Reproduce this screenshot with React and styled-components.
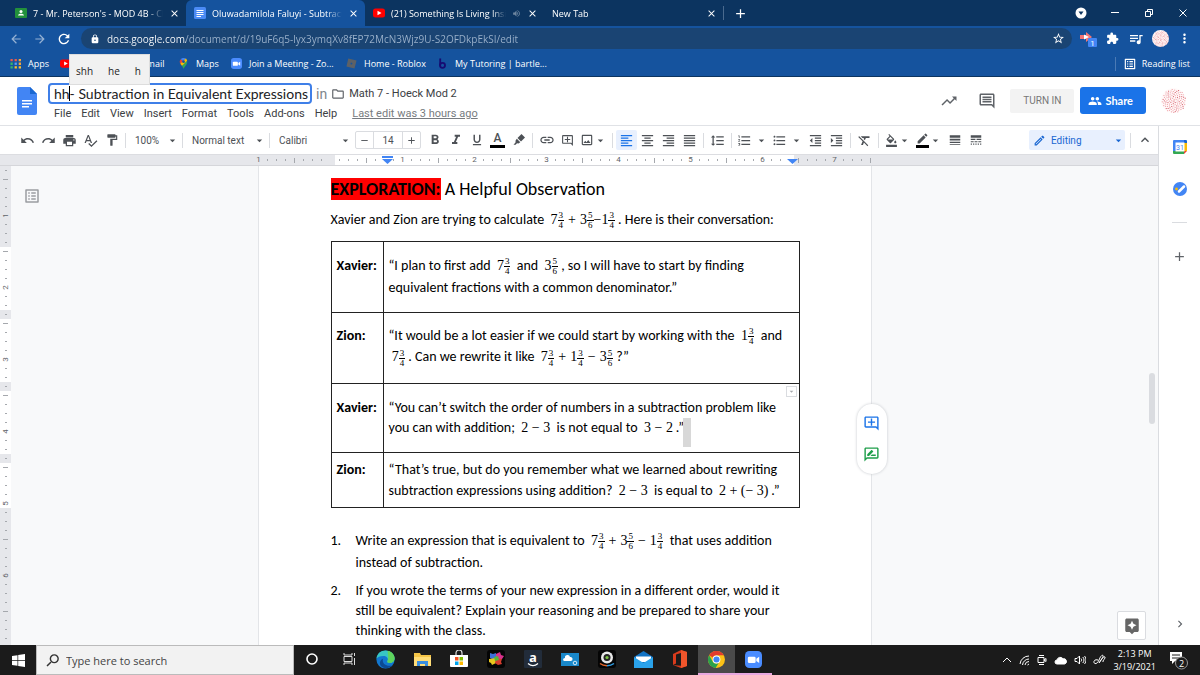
import React from 'react'
import styled, { createGlobalStyle } from 'styled-components'
import {
    MdArrowBack, MdArrowForward, MdRefresh, MdLock, MdStarBorder, MdExtension, MdQueueMusic, MdMoreVert,
    MdClose, MdAdd, MdRemove, MdVolumeUp, MdOutlineListAlt, MdOutlineFolder, MdTrendingUp,
    MdOutlineInsertComment, MdGroup, MdUndo, MdRedo, MdPrint, MdSpellcheck, MdFormatPaint,
    MdArrowDropDown, MdFormatBold, MdFormatItalic, MdFormatUnderlined, MdInsertLink, MdOutlineAddComment,
    MdOutlineImage, MdFormatAlignLeft, MdFormatAlignCenter, MdFormatAlignRight, MdFormatAlignJustify,
    MdFormatLineSpacing, MdFormatListNumbered, MdFormatListBulleted, MdFormatIndentDecrease,
    MdFormatIndentIncrease, MdFormatClear, MdFormatColorFill, MdLineWeight, MdLineStyle, MdExpandLess,
    MdOutlineEdit, MdEdit, MdOutlineRateReview, MdChevronRight, MdAssistant, MdSearch,
} from 'react-icons/md'

const GlobalStyle = createGlobalStyle`
    * {
        box-sizing: border-box;
    }
    body {
        margin: 0;
        font-family: Roboto, "Liberation Sans", sans-serif;
        color: #000;
    }
    button, input, select {
        font: inherit;
        color: inherit;
        margin: 0;
        padding: 0;
        border: none;
        background: none;
        outline: none;
    }
    svg {
        display: block;
        flex: none;
    }
`

const tabs = [
    { title: "7 - Mr. Peterson's - MOD 4B - Ch", icon: 'classroom' },
    { title: 'Oluwadamilola Faluyi - Subtractic', icon: 'docs', active: true },
    { title: '(21) Something Is Living Insic', icon: 'youtube', sound: true },
    { title: 'New Tab' },
]

const bookmarks = [
    { id: 'apps', label: 'Apps', width: 50 },
    { id: 'youtube', width: 62 },
    { id: 'gmail', label: 'Gmail', width: 56 },
    { id: 'maps', label: 'Maps', width: 53 },
    { id: 'zoom', label: 'Join a Meeting - Zo...', width: 115 },
    { id: 'roblox', label: 'Home - Roblox', width: 91 },
    { id: 'bartleby', label: 'My Tutoring | bartle...', width: 120 },
]

const menus = ['File', 'Edit', 'View', 'Insert', 'Format', 'Tools', 'Add-ons', 'Help']

const Glyph = ({ name, size = 12 }) => {
    const box = { width: size, height: size, viewBox: '0 0 24 24' }
    switch (name) {
        case 'classroom':
            return (
                <svg {...box}>
                    <rect y="2" width="24" height="20" rx="2" fill="#23913c" />
                    <circle cx="12" cy="9" r="3" fill="#fff" />
                    <path d="M6 17c0-5 12-5 12 0z" fill="#fff" />
                </svg>
            )
        case 'docs':
            return (
                <svg {...box}>
                    <rect width="24" height="24" rx="3" fill="#4b8bf5" />
                    <path d="M5 6h14v2H5zM5 10h14v2H5zM5 14h14v2H5zM5 18h9v2H5z" fill="#fff" />
                </svg>
            )
        case 'youtube':
            return (
                <svg {...box}>
                    <rect y="3" width="24" height="18" rx="5" fill="#f00" />
                    <path d="M9 7.500v9l8-4.500z" fill="#fff" />
                </svg>
            )
        case 'apps':
            return (
                <svg {...box}>
                    <path d="M1 2h5v5H1zM10 2h5v5h-5z" fill="#ea5b4c" />
                    <path d="M19 2h5v5h-5zM19 10h5v5h-5z" fill="#f4a43a" />
                    <path d="M1 10h5v5H1zM1 18h5v5H1z" fill="#35b56a" />
                    <path d="M10 10h5v5h-5z" fill="#5b9cf8" />
                    <path d="M10 18h5v5h-5zM19 18h5v5h-5z" fill="#fbc02d" />
                </svg>
            )
        case 'gmail':
            return (
                <svg {...box}>
                    <rect y="4" width="24" height="17" rx="2" fill="#fff" />
                    <path d="M2 6l10 8 10-8" stroke="#ea4335" strokeWidth="4" fill="none" />
                </svg>
            )
        case 'maps':
            return (
                <svg {...box}>
                    <path d="M12 0a8 8 0 0 0-6 2.500l6 5.500 5-6.800A9 9 0 0 0 12 0z" fill="#4285f4" />
                    <path d="M6 2.500C3.500 5 3 9 5 12.500L12 8z" fill="#ea4335" />
                    <path d="M5 12.500l4 5L20 6.500C19.500 4 18.500 2 17 1.200z" fill="#fbbc04" />
                    <path d="M9 17.500c1.500 2 2.300 4 3 6.500 1-5 8-9 8-15.500 0-.8 0-1.400-.2-2z" fill="#34a853" />
                    <circle cx="12" cy="8" r="3" fill="#15539e" />
                </svg>
            )
        case 'zoom':
            return (
                <svg {...box}>
                    <rect width="24" height="24" rx="6" fill="#4a8cff" />
                    <rect x="4" y="8" width="11" height="9" rx="2" fill="#fff" />
                    <path d="M16 11l4-3v9l-4-3z" fill="#fff" />
                </svg>
            )
        case 'roblox':
            return (
                <svg {...box}>
                    <path fillRule="evenodd" d="M5 1l18 4.500L18.500 23 1 18.500zM10.500 10l-.8 3.500 3.500.8.800-3.500z" fill="#5d6166" />
                </svg>
            )
        case 'bartleby':
            return (
                <svg {...box}>
                    <path d="M7 1v15" stroke="#160c72" strokeWidth="4" />
                    <circle cx="12" cy="16" r="5.500" fill="none" stroke="#160c72" strokeWidth="4" />
                </svg>
            )
        default:
            return null
    }
}

const speckles = Array.from({ length: 110 }, (_, i) => {
    const angle = i * 2.4
    const radius = Math.sqrt(i / 110) * 11.5
    return [12 + Math.cos(angle) * radius, 12 + Math.sin(angle) * radius]
})

const Avatar = ({ size }) => (
    <svg width={size} height={size} viewBox="0 0 24 24">
        <circle cx="12" cy="12" r="12" fill="#fffafa" />
        {speckles.map(([x, y], i) => (
            <rect key={i} x={x} y={y} width="1" height="1" fill={i % 3 ? '#efa3a9' : '#d9606c'} />
        ))}
    </svg>
)

const Browser = () => (
    <>
        <TabStrip>
            {tabs.map(tab => (
                <Tab key={tab.title} $active={tab.active}>
                    <Glyph name={tab.icon} />
                    <span>{tab.title}</span>
                    {tab.sound && <MdVolumeUp size={9} opacity={0.4} />}
                    <button aria-label="Close tab"><MdClose size={11} /></button>
                </Tab>
            ))}
            <NewTab aria-label="New tab"><MdAdd size={15} /></NewTab>
            <WindowControls>
                <button aria-label="Search tabs">
                    <svg width="12" height="12" viewBox="0 0 12 12">
                        <circle cx="6" cy="6" r="5.500" fill="#fff" />
                        <path d="M3.500 4.500h5L6 8z" fill="#0c3460" />
                    </svg>
                </button>
                <button aria-label="Minimize">
                    <svg width="9" height="9" viewBox="0 0 9 9"><path d="M0 3.500h8" stroke="#fff" /></svg>
                </button>
                <button aria-label="Restore">
                    <svg width="9" height="9" viewBox="0 0 9 9" fill="none" stroke="#fff">
                        <path d="M.5 2.500h5v5h-5zM2.500 2.500v-2h5v5h-2" />
                    </svg>
                </button>
                <button aria-label="Close">
                    <svg width="9" height="9" viewBox="0 0 9 9" stroke="#fff"><path d="M.5.5l7 7M7.500.5l-7 7" /></svg>
                </button>
            </WindowControls>
        </TabStrip>
        <AddressBar>
            <NavButton $dim aria-label="Back"><MdArrowBack size={14} /></NavButton>
            <NavButton $dim aria-label="Forward"><MdArrowForward size={14} /></NavButton>
            <NavButton aria-label="Reload"><MdRefresh size={16} /></NavButton>
            <Omnibox>
                <MdLock size={10} />
                <input
                    aria-label="Address"
                    defaultValue="docs.google.com/document/d/19uF6q5-lyx3ymqXv8fEP72McN3Wjz9U-S2OFDkpEkSI/edit"
                />
                <MdStarBorder size={13} />
            </Omnibox>
            <Extensions>
                <button aria-label="Screencastify">
                    <svg width="18" height="18" viewBox="0 0 18 18">
                        <path d="M1 5h6V2l6 5-6 5V9H1z" fill="#f27474" />
                        <path d="M5 4.500l5 2.500-5 2.500z" fill="#fff" />
                        <rect x="9" y="8" width="9" height="9" rx="1" fill="#4285f4" />
                        <text x="13.500" y="15.500" fontSize="8" textAnchor="middle" fill="#fff">1</text>
                    </svg>
                </button>
                <button aria-label="Extensions"><MdExtension size={13} /></button>
                <button aria-label="Media"><MdQueueMusic size={16} /></button>
                <button aria-label="Profile"><Avatar size={17} /></button>
                <button aria-label="More"><MdMoreVert size={15} /></button>
            </Extensions>
        </AddressBar>
        <Bookmarks>
            {bookmarks.map(b => (
                <Bookmark key={b.id} href="#" aria-label={b.label || b.id} $width={b.width}>
                    <Glyph name={b.id} size={11} />
                    {b.label}
                </Bookmark>
            ))}
            <ReadingList>
                <MdOutlineListAlt size={14} />
                Reading list
            </ReadingList>
        </Bookmarks>
    </>
)

const Header = () => (
    <DocHeader>
        <svg width="20" height="28" viewBox="0 0 20 28">
            <path d="M2 0h11l7 7v19a2 2 0 0 1-2 2H2a2 2 0 0 1-2-2V2a2 2 0 0 1 2-2z" fill="#4285f4" />
            <path d="M13 0l7 7h-7z" fill="#1967d2" />
            <path d="M5 13h10v1.500H5zM5 16h10v1.500H5zM5 19h7v1.500H5z" fill="#fff" />
        </svg>
        <TitleBlock>
            <TitleRow>
                <TitleField>
                    <input aria-label="Document title" defaultValue="hh- Subtraction in Equivalent Expressions" />
                    <Caret />
                    <Suggestions>
                        <button>shh</button>
                        <button>he</button>
                        <button>h</button>
                    </Suggestions>
                </TitleField>
                <In>in</In>
                <MdOutlineFolder size={14} color="#5f6368" />
                <Folder href="#">Math 7 - Hoeck Mod 2</Folder>
            </TitleRow>
            <Menus>
                {menus.map(m => <button key={m}>{m}</button>)}
                <a href="#">Last edit was 3 hours ago</a>
            </Menus>
        </TitleBlock>
        <HeaderActions>
            <IconButton aria-label="Activity"><MdTrendingUp size={18} /></IconButton>
            <IconButton aria-label="Comments"><MdOutlineInsertComment size={18} /></IconButton>
            <TurnIn>TURN IN</TurnIn>
            <Share><MdGroup size={14} />Share</Share>
            <Avatar size={25} />
        </HeaderActions>
    </DocHeader>
)

const Picker = ({ label, value, width }) => (
    <PickerBox $width={width}>
        <select aria-label={label} defaultValue={value}>
            <option>{value}</option>
        </select>
        <MdArrowDropDown size={13} />
    </PickerBox>
)

const Tool = ({ label, icon: Icon, size = 15, drop, wide, active, mark }) => (
    <ToolButton aria-label={label} $drop={drop} $wide={wide} $active={active} $mark={mark}>
        <i><Icon size={size} /></i>
        {(drop || wide) && <MdArrowDropDown size={13} />}
    </ToolButton>
)

const LetterA = () => <b>A</b>

const Marker = ({ size }) => (
    <svg width={size} height={size} viewBox="0 0 12 12" fill="currentColor">
        <path d="M8.500 0L12 3.500 8 7.500 4.500 4zM3.800 4.700l3.500 3.500L5.500 9.500 4 9.300 2.600 10.800H.5l2-2.300.1-2z" />
    </svg>
)

const Toolbar = () => (
    <ToolbarRow>
        <Tool label="Undo" icon={MdUndo} />
        <Tool label="Redo" icon={MdRedo} />
        <Tool label="Print" icon={MdPrint} />
        <Tool label="Spelling" icon={MdSpellcheck} />
        <Tool label="Paint format" icon={MdFormatPaint} size={14} />
        <Divider />
        <Picker label="Zoom" value="100%" width={44} />
        <Divider />
        <Picker label="Style" value="Normal text" width={74} />
        <Divider />
        <Picker label="Font" value="Calibri" width={73} />
        <FontSize>
            <button aria-label="Decrease"><MdRemove size={11} /></button>
            <input aria-label="Font size" defaultValue="14" />
            <button aria-label="Increase"><MdAdd size={11} /></button>
        </FontSize>
        <Tool label="Bold" icon={MdFormatBold} size={16} />
        <Tool label="Italic" icon={MdFormatItalic} size={16} />
        <Tool label="Underline" icon={MdFormatUnderlined} size={14} />
        <Tool label="Text color" icon={LetterA} mark />
        <Tool label="Highlight" icon={Marker} size={12} />
        <Divider />
        <Tool label="Link" icon={MdInsertLink} size={16} />
        <Tool label="Comment" icon={MdOutlineAddComment} size={13} />
        <Tool label="Image" icon={MdOutlineImage} size={14} drop />
        <Divider />
        <Tool label="Left" icon={MdFormatAlignLeft} active />
        <Tool label="Center" icon={MdFormatAlignCenter} />
        <Tool label="Right" icon={MdFormatAlignRight} />
        <Tool label="Justify" icon={MdFormatAlignJustify} />
        <Divider />
        <Tool label="Line spacing" icon={MdFormatLineSpacing} />
        <Divider />
        <Tool label="Numbered list" icon={MdFormatListNumbered} wide />
        <Tool label="Bulleted list" icon={MdFormatListBulleted} wide />
        <Tool label="Outdent" icon={MdFormatIndentDecrease} />
        <Tool label="Indent" icon={MdFormatIndentIncrease} />
        <Divider />
        <Tool label="Clear formatting" icon={MdFormatClear} />
        <Divider />
        <Tool label="Fill color" icon={MdFormatColorFill} size={13} drop />
        <Tool label="Border color" icon={MdEdit} size={13} drop mark />
        <Tool label="Border width" icon={MdLineWeight} size={14} />
        <Tool label="Border dash" icon={MdLineStyle} size={14} />
        <EditingMode>
            <MdOutlineEdit size={13} />
            <select aria-label="Mode" defaultValue="Editing">
                <option>Editing</option>
            </select>
            <MdArrowDropDown size={13} />
        </EditingMode>
        <Divider />
        <Tool label="Hide menus" icon={MdExpandLess} size={16} />
    </ToolbarRow>
)

const ticks = Array.from({ length: 69 }, (_, i) => i)

const tickLabel = i => (i === 0 ? '1' : i % 8 === 0 && i > 8 ? i / 8 - 1 : '')

const Ruler = () => (
    <RulerBar>
        <RulerStrip>
            {ticks.map(i => (
                <Tick key={i} $white={i > 8 && i < 60} $major={i % 8 === 4} $none={i % 8 === 0}>
                    {tickLabel(i)}
                    {(i === 14 || i === 59) && (
                        <svg width="11" height="8" viewBox="0 0 11 8">
                            {i === 14 && <path d="M0 0h11v2H0z" fill="#4285f4" />}
                            <path d="M0 3h11L5.500 8z" fill="#4285f4" />
                        </svg>
                    )}
                </Tick>
            ))}
        </RulerStrip>
    </RulerBar>
)

// table rows are white on the side ruler, with a handle at each inner border
const rowHandles = [16, 24, 32]

const SideRuler = () => (
    <SideRulerBar>
        {ticks.slice(0, 53).map(i => (
            <SideTick
                key={i}
                $white={i > 8 && i < 38 && !rowHandles.includes(i)}
                $major={i % 8 === 1}
                $none={i % 8 === 5}
            >
                {i % 8 === 5 && <span>{(i + 3) / 8}</span>}
            </SideTick>
        ))}
    </SideRulerBar>
)

const Mixed = ({ w, n, d }) => (
    <MathText>
        {w}
        <Fraction><span>{n}</span><span>{d}</span></Fraction>
    </MathText>
)

const A = () => <Mixed w="7" n="3" d="4" />
const B = () => <Mixed w="3" n="5" d="6" />
const C = () => <Mixed w="1" n="3" d="4" />

const Document = () => (
    <Page>
        <h1><mark>EXPLORATION:</mark> A Helpful Observation</h1>
        <p>
            Xavier and Zion are trying to calculate&nbsp; <A /><Op>+</Op><B /><MathText>−</MathText><C />&nbsp;. Here is their conversation:
        </p>
        <Talk>
            <tbody>
                <TalkRow $height={71} $top={13} $line={22}>
                    <th scope="row">Xavier:</th>
                    <td>
                        “I plan to first add&nbsp; <A />&nbsp; and&nbsp; <B />&nbsp;, so I will have to start by finding<br />
                        equivalent fractions with a common denominator.”
                    </td>
                </TalkRow>
                <TalkRow $height={71} $top={12} $line={21}>
                    <th scope="row">Zion:</th>
                    <td>
                        “It would be a lot easier if we could start by working with the&nbsp; <C />&nbsp; and<br />
                        &nbsp;<A />&nbsp;. Can we rewrite it like&nbsp; <A /><Op>+</Op><C /><Op>−</Op><B /> ?”
                    </td>
                </TalkRow>
                <TalkRow $height={69} $top={14} $line={20}>
                    <th scope="row">Xavier:</th>
                    <td>
                        “You can’t switch the order of numbers in a subtraction problem like<br />
                        you can with addition;&nbsp; <MathText>2 − 3</MathText>&nbsp; is not equal to&nbsp; <MathText>3 − 2</MathText>&thinsp;.”
                        <Selection />
                        <CellMenu aria-label="Cell options"><MdArrowDropDown size={9} /></CellMenu>
                    </td>
                </TalkRow>
                <TalkRow $height={55} $top={6} $line={21}>
                    <th scope="row">Zion:</th>
                    <td>
                        “That’s true, but do you remember what we learned about rewriting<br />
                        subtraction expressions using addition?&nbsp; <MathText>2 − 3</MathText>&nbsp; is equal to&nbsp; <MathText>2 + (− 3)</MathText>&thinsp;.”
                    </td>
                </TalkRow>
            </tbody>
        </Talk>
        <Questions>
            <Question $line={22}>
                Write an expression that is equivalent to&nbsp; <A /><Op>+</Op><B /><Op>−</Op><C />&nbsp; that uses addition<br />
                instead of subtraction.
            </Question>
            <Question $line={20}>
                If you wrote the terms of your new expression in a different order, would it<br />
                still be equivalent? Explain your reasoning and be prepared to share your<br />
                thinking with the class.
            </Question>
        </Questions>
        <CommentPill>
            <button aria-label="Add comment"><MdOutlineAddComment size={17} color="#1a73e8" /></button>
            <button aria-label="Suggest edits"><MdOutlineRateReview size={17} color="#1e9e4a" /></button>
        </CommentPill>
    </Page>
)

const SidePanel = () => (
    <Side>
        <button aria-label="Calendar">
            <svg width="14" height="14" viewBox="0 0 14 14">
                <path d="M0 1a1 1 0 0 1 1-1h10v3H3v8H0z" fill="#4285f4" />
                <path d="M11 0h2a1 1 0 0 1 1 1v2h-3z" fill="#1967d2" />
                <path d="M11 3h3v8h-3z" fill="#fbbc04" />
                <path d="M0 11h11v3H1a1 1 0 0 1-1-1z" fill="#34a853" />
                <path d="M11 11h3l-3 3z" fill="#ea4335" />
                <path d="M2.500 2.500h9v9h-9z" fill="#fff" />
                <text x="7" y="9.500" fontSize="7" textAnchor="middle" fill="#4285f4">31</text>
            </svg>
        </button>
        <button aria-label="Tasks">
            <svg width="14" height="14" viewBox="0 0 14 14">
                <circle cx="7" cy="7" r="7" fill="#4285f4" />
                <path d="M6 9.500l5-5" stroke="#fff" strokeWidth="2.500" strokeLinecap="round" />
                <circle cx="3.500" cy="7" r="1.400" fill="#fbbc04" />
            </svg>
        </button>
        <hr />
        <button aria-label="Get add-ons"><MdAdd size={15} /></button>
        <button aria-label="Hide side panel"><MdChevronRight size={14} /></button>
    </Side>
)

const Taskbar = () => (
    <TaskbarRow>
        <Start aria-label="Start">
            <svg width="13" height="13" viewBox="0 0 13 13" fill="#fff">
                <path d="M0 2l5.500-.8V6H0zM6.200 1.100L13 0v6H6.200zM0 6.800h5.500v5L0 11zM6.200 6.800H13V13l-6.800-1z" />
            </svg>
        </Start>
        <TaskSearch>
            <MdSearch size={17} />
            <input aria-label="Search" placeholder="Type here to search" />
        </TaskSearch>
        <Pinned>
            <TaskButton aria-label="Cortana">
                <svg width="12" height="12" viewBox="0 0 12 12"><circle cx="6" cy="6" r="5" fill="none" stroke="#fff" strokeWidth="1.600" /></svg>
            </TaskButton>
            <TaskButton aria-label="Task view">
                <svg width="13" height="12" viewBox="0 0 13 12" fill="none" stroke="#ddd">
                    <path d="M1 0v2h8V0M1 12v-2h8v2M1 3.500h8v5H1zM11.500 0v3M11.500 5v7" />
                </svg>
            </TaskButton>
            <TaskButton aria-label="Edge">
                <svg width="19" height="19" viewBox="0 0 24 24">
                    <circle cx="12" cy="12" r="11.500" fill="#1277cf" />
                    <path d="M.5 11C1.500 4 6 .5 12 .5c7 0 11.500 5 11.500 10 0 4-3 6-6 6-2.500 0-4-1-3-2.500 1.500-3-.5-6.500-5-6.500C5 7.500 1.500 9 .5 11z" fill="#37c6c4" />
                    <path d="M15 1c6 1.500 8.500 6 8.500 9.500 0 4-3 6-6 6-2.500 0-4-1-3-2.500C17 9 14 3 15 1z" fill="#5fd45c" />
                    <path d="M9 11c-2 5 3 10.500 11 8.500-4 5.500-16 4-15-4 .3-2 2-4 4-4.500z" fill="#0c4a94" />
                </svg>
            </TaskButton>
            <TaskButton aria-label="File Explorer">
                <svg width="17" height="15" viewBox="0 0 17 15">
                    <path d="M0 1h6l1 2h10v11H0z" fill="#f5c548" />
                    <path d="M0 5h17v9H0z" fill="#ffdd78" />
                    <path d="M3 9h11v5h-3v-2H6v2H3z" fill="#3b8ede" />
                </svg>
            </TaskButton>
            <TaskButton aria-label="Store">
                <svg width="18" height="18" viewBox="0 0 18 18">
                    <path d="M6 5V3a3 3 0 0 1 6 0v2" fill="none" stroke="#ddd" strokeWidth="1.200" />
                    <path d="M0 5h18v11a1 1 0 0 1-1 1H1a1 1 0 0 1-1-1z" fill="#fff" />
                    <path d="M5 7h3.500v3.500H5z" fill="#f25022" />
                    <path d="M9.500 7H13v3.500H9.500z" fill="#7fba00" />
                    <path d="M5 11.500h3.500V15H5z" fill="#00a4ef" />
                    <path d="M9.500 11.500H13V15H9.500z" fill="#ffb900" />
                </svg>
            </TaskButton>
            <TaskButton aria-label="Puzzle">
                <svg width="18" height="18" viewBox="0 0 18 18">
                    <rect width="18" height="18" rx="3" fill="#050505" />
                    <path d="M3 3l3 1 3-1v6H5L3 8z" fill="#3d6fd8" />
                    <path d="M9 4l4-2 1 3 3 1-2 3H9z" fill="#d9318c" />
                    <path d="M2 9l7-1v5l-4 2-1-2-2-1z" fill="#e8c61e" />
                    <path d="M9 8l6 1-1 3 1 2-4 1-3-2z" fill="#d63c2e" />
                    <path d="M7 7l4-1 1 4-4 1z" fill="#55b53c" />
                </svg>
            </TaskButton>
            <TaskButton aria-label="Amazon">
                <svg width="18" height="18" viewBox="0 0 18 18">
                    <rect width="18" height="18" rx="1" fill="#222c3a" />
                    <text x="9" y="12" fontSize="13" fontWeight="700" textAnchor="middle" fill="#fff">a</text>
                    <path d="M4 13.500c3 2.500 7 2.500 10 0" fill="none" stroke="#fff" strokeWidth="1.200" />
                </svg>
            </TaskButton>
            <TaskButton aria-label="Cloud files">
                <svg width="18" height="13" viewBox="0 0 18 13">
                    <rect width="18" height="13" fill="#1988ca" />
                    <path d="M2 7a2 2 0 0 1 2-2 2.500 2.500 0 0 1 5-1 2 2 0 0 1 1 4H3z" fill="#fff" />
                    <circle cx="14" cy="10" r="1.800" fill="none" stroke="#fff" strokeWidth=".8" />
                </svg>
            </TaskButton>
            <TaskButton aria-label="Camera">
                <svg width="18" height="18" viewBox="0 0 18 18">
                    <rect width="18" height="18" rx="3" fill="#050505" />
                    <circle cx="9" cy="7.500" r="6" fill="#e8e8e8" />
                    <circle cx="9" cy="7.500" r="3.500" fill="#222" />
                    <circle cx="9" cy="7.500" r="1.600" fill="#7ac142" />
                    <path d="M2 13.500c2 1.500 4 2.200 7 2.200" fill="none" stroke="#e7672c" strokeWidth="1.500" />
                    <path d="M9 15.700c3 0 5-.7 7-2.200" fill="none" stroke="#2f9be0" strokeWidth="1.500" />
                </svg>
            </TaskButton>
            <TaskButton aria-label="Mail">
                <svg width="19" height="17" viewBox="0 0 19 17">
                    <path d="M0 6l9.500-6L19 6v11H0z" fill="#1273c4" />
                    <path d="M2 5.500h15V11H2z" fill="#fff" />
                    <path d="M0 6l9.500 6L19 6v11H0z" fill="#2aa2ea" />
                </svg>
            </TaskButton>
            <TaskButton aria-label="Office">
                <svg width="14" height="18" viewBox="0 0 14 18">
                    <path d="M0 4l8-4 6 2v14l-6 2-8-3 8 .7V3L3 4.500v9L0 15z" fill="#d83b1c" />
                    <path d="M8 0l6 2v14l-6 2z" fill="#f0552b" />
                </svg>
            </TaskButton>
            <TaskButton aria-label="Chrome" $running $active>
                <svg width="17" height="17" viewBox="0 0 24 24">
                    <circle cx="12" cy="12" r="12" fill="#fbc116" />
                    <path d="M1.600 6A12 12 0 0 1 22.400 6H12a6 6 0 0 0-5.200 3z" fill="#e33b2e" />
                    <path d="M1.600 6a12 12 0 0 0 9.200 18l5-8.500L12 18a6 6 0 0 1-5.200-3z" fill="#2ba24c" />
                    <circle cx="12" cy="12" r="5.500" fill="#fff" />
                    <circle cx="12" cy="12" r="4.300" fill="#4285f4" />
                </svg>
            </TaskButton>
            <TaskButton aria-label="Zoom" $running><Glyph name="zoom" size={17} /></TaskButton>
        </Pinned>
        <Tray>
            <svg width="10" height="6" viewBox="0 0 10 6"><path d="M1 5l4-4 4 4" /></svg>
            <svg width="11" height="11" viewBox="0 0 11 11">
                <path d="M1 9a9 9 0 0 1 9-8M3.500 10a6.500 6.500 0 0 1 6.500-6M6 10a4 4 0 0 1 4-3.500M8.500 10L10 9" />
            </svg>
            <svg width="10" height="12" viewBox="0 0 10 12">
                <path d="M1 3.500h6v5H1zM7 6l2-1.500v3zM2 1.500h5M2 10.500h5" />
            </svg>
            <svg width="13" height="9" viewBox="0 0 13 9">
                <path d="M3 8a2 2 0 0 1 0-4 3.300 3.300 0 0 1 6-1.200A2.600 2.600 0 0 1 10.500 8z" fill="#fff" />
            </svg>
            <svg width="12" height="10" viewBox="0 0 12 10">
                <path d="M1 3.500h2L5.500 1v8L3 6.500H1zM7 3.500c.8 1 .8 2 0 3M8.800 2c1.600 2 1.600 4 0 6M10.500 1c2 2.500 2 5.500 0 8" />
            </svg>
            <svg width="13" height="12" viewBox="0 0 13 12">
                <path d="M5 6C2 5 .5 7 1 8.500 2 11 5 9 6 6s3-5.500 4-4.500-3 6-4 7.500c3-5 5-7 6-6s-3 4-2 5" />
            </svg>
            <Clock>
                <span>2:13 PM</span>
                <span>3/19/2021</span>
            </Clock>
            <Notice aria-label="Notifications">
                <svg width="20" height="19" viewBox="0 0 20 19">
                    <path d="M1 1h12v9H6l-3 3v-3H1z" fill="#fff" stroke="none" />
                    <path d="M3 4h8M3 7h8" stroke="#1c1c1c" />
                    <circle cx="12.500" cy="12" r="6" fill="#1c1c1c" stroke="#999" />
                    <text x="12.500" y="15.500" fontSize="9" textAnchor="middle" fill="#fff" stroke="none">2</text>
                </svg>
            </Notice>
        </Tray>
    </TaskbarRow>
)

const App = () => (
    <Screen>
        <GlobalStyle />
        <Browser />
        <Header />
        <Workspace>
            <Main>
                <Toolbar />
                <Ruler />
                <Canvas>
                    <SideRuler />
                    <OutlineButton aria-label="Show outline"><MdOutlineListAlt size={18} /></OutlineButton>
                    <Document />
                    <ScrollThumb />
                    <Explore aria-label="Explore"><MdAssistant size={18} /></Explore>
                </Canvas>
            </Main>
            <SidePanel />
        </Workspace>
        <Taskbar />
    </Screen>
)

const Screen = styled.div`
    height: 100vh;
    display: flex;
    flex-direction: column;
    overflow: hidden;
    background-color: #fff;
`

const TabStrip = styled.div`
    height: 26px;
    flex: none;
    display: flex;
    align-items: stretch;
    padding-left: 7px;
    background-color: #0c3460;
    color: #fff;
    font-family: "Open Sans", sans-serif;
    font-size: 9px;
    font-weight: 500;
`

const Tab = styled.div`
    width: 179px;
    display: flex;
    align-items: center;
    gap: 6px;
    padding: 0 6px 0 8px;
    border-radius: 6px 6px 0 0;
    background-color: ${p => p.$active ? '#15539e' : 'transparent'};
    span {
        flex: 1;
        min-width: 0;
        white-space: nowrap;
        mask-image: linear-gradient(to right, #000 88%, transparent);
    }
`

const NewTab = styled.button`
    margin: 6px 0;
    padding: 0 9px;
    border-left: 1px solid #4a6a8e;
`

const WindowControls = styled.div`
    margin-left: auto;
    display: flex;
    button {
        width: 34px;
        display: flex;
        align-items: center;
        justify-content: center;
    }
`

const AddressBar = styled.div`
    height: 25px;
    flex: none;
    display: flex;
    align-items: center;
    padding: 0 4px;
    background-color: #15539e;
    color: #fff;
`

const NavButton = styled.button`
    width: 24px;
    display: flex;
    justify-content: center;
    opacity: ${p => p.$dim ? 0.55 : 1};
`

const Omnibox = styled.div`
    flex: 1;
    height: 21px;
    margin-left: 5px;
    display: flex;
    align-items: center;
    gap: 7px;
    padding: 0 7px 0 9px;
    border-radius: 11px;
    background-color: #1a4473;
    font-family: "Open Sans", sans-serif;
    font-size: 10px;
    input {
        flex: 1;
        color: transparent;
        background-image: linear-gradient(to right, #fff 79px, #9db3cc 79px);
        background-clip: text;
    }
`

const Extensions = styled.div`
    display: flex;
    margin-left: 4px;
    button {
        width: 24px;
        display: flex;
        align-items: center;
        justify-content: center;
    }
`

const Bookmarks = styled.div`
    height: 26px;
    flex: none;
    display: flex;
    align-items: center;
    padding: 0 10px;
    border-bottom: 1px solid #0c3460;
    background-color: #15539e;
    color: #fff;
    font-family: "Open Sans", sans-serif;
    font-size: 9px;
    font-weight: 500;
`

const Bookmark = styled.a`
    width: ${p => p.$width}px;
    display: flex;
    align-items: center;
    gap: 7px;
    color: inherit;
    text-decoration: none;
    white-space: nowrap;
`

const ReadingList = styled.button`
    margin-left: auto;
    padding-left: 7px;
    display: flex;
    align-items: center;
    gap: 5px;
    border-left: 1px solid #4a7ab5;
`

const DocHeader = styled.header`
    height: 49px;
    flex: none;
    display: flex;
    align-items: flex-start;
    padding: 10px 14px 0 17px;
    border-bottom: 1px solid #e0e2e6;
    color: #3c4043;
`

const TitleBlock = styled.div`
    margin: -4px 0 0 11px;
`

const TitleRow = styled.div`
    display: flex;
    align-items: center;
    gap: 4px;
`

const TitleField = styled.div`
    position: relative;
    input {
        width: 264px;
        height: 21px;
        padding-left: 4px;
        border: 2px solid #3f7fe8;
        border-radius: 4px;
        font-family: Lato, sans-serif;
        font-size: 14px;
        color: #202124;
    }
`

const Caret = styled.span`
    position: absolute;
    left: 21px;
    top: 3px;
    width: 1px;
    height: 15px;
    background-color: #000;
`

const Suggestions = styled.div`
    position: absolute;
    left: 21px;
    bottom: 19px;
    height: 31px;
    display: flex;
    align-items: center;
    gap: 15px;
    padding: 2px 8px 0 6px;
    background-color: #f1f1f1;
    border: 1px solid #ddd;
    color: #222;
    font-family: "Open Sans", sans-serif;
    font-size: 10px;
`

const In = styled.span`
    font-size: 14px;
    color: #80868b;
`

const Folder = styled.a`
    font-size: 11px;
    color: inherit;
    text-decoration: none;
`

const Menus = styled.nav`
    display: flex;
    gap: 10px;
    padding: 3px 6px 0;
    font-size: 11px;
    a {
        margin-left: 5px;
        color: #777b80;
    }
`

const HeaderActions = styled.div`
    margin-left: auto;
    display: flex;
    align-items: center;
`

const IconButton = styled.button`
    width: 38px;
    display: flex;
    justify-content: center;
    color: #5f6368;
`

const TurnIn = styled.button`
    height: 24px;
    margin: 0 6px 0 4px;
    padding: 0 13px;
    border-radius: 2px;
    background-color: #f3f3f3;
    color: #777;
    font-size: 10px;
`

const Share = styled.button`
    height: 27px;
    display: flex;
    align-items: center;
    gap: 3px;
    margin-right: 15px;
    padding: 0 13px 0 8px;
    border-radius: 3px;
    background-color: #1a73e8;
    color: #fff;
    font-family: Lato, sans-serif;
    font-size: 11px;
    font-weight: 700;
`

const Workspace = styled.div`
    flex: 1;
    min-height: 0;
    display: flex;
`

const Main = styled.main`
    flex: 1;
    min-width: 0;
    display: flex;
    flex-direction: column;
`

const ToolbarRow = styled.div`
    height: 28px;
    flex: none;
    display: flex;
    align-items: center;
    padding: 0 3px 0 17px;
    color: #4d5156;
    font-size: 10px;
`

const Divider = styled.span`
    width: 1px;
    height: 15px;
    flex: none;
    margin: 0 3px;
    background-color: #dadce0;
`

const ToolButton = styled.button`
    width: ${p => p.$wide ? 35 : p.$drop ? 31 : 21}px;
    height: 20px;
    flex: none;
    display: flex;
    align-items: center;
    justify-content: ${p => p.$wide ? 'space-between' : 'center'};
    padding: ${p => p.$wide ? '0 2px' : 0};
    border-radius: 2px;
    background-color: ${p => p.$active ? '#e8f0fe' : 'transparent'};
    color: ${p => p.$active ? '#1a73e8' : 'inherit'};
    i {
        font-style: normal;
        border-bottom: ${p => p.$mark ? '3px solid #000' : 'none'};
    }
    b {
        display: block;
        padding: 0 4px;
        font-size: 12px;
        line-height: 13px;
        font-weight: 500;
    }
`

const PickerBox = styled.label`
    width: ${p => p.$width}px;
    margin-left: 6px;
    display: flex;
    align-items: center;
    select {
        flex: 1;
        min-width: 0;
        appearance: none;
    }
`

const FontSize = styled.div`
    height: 18px;
    display: flex;
    margin: 0 3px;
    border: 1px solid #dadce0;
    border-radius: 2px;
    button {
        width: 17px;
        display: flex;
        align-items: center;
        justify-content: center;
    }
    input {
        width: 30px;
        text-align: center;
        border: solid #dadce0;
        border-width: 0 1px;
    }
`

const EditingMode = styled.label`
    width: 96px;
    height: 20px;
    margin: 0 2px 0 auto;
    display: flex;
    align-items: center;
    gap: 5px;
    padding: 0 0 0 4px;
    border-radius: 2px;
    background-color: #e8f0fe;
    color: #1967d2;
    select {
        flex: 1;
        appearance: none;
    }
`

const RulerBar = styled.div`
    height: 12px;
    flex: none;
    display: flex;
    justify-content: center;
    padding: 0 40px 0 11px;
    background-color: #e6e7eb;
    border-top: 1px solid #dcdde1;
    border-bottom: 1px solid #d5d6da;
`

const RulerStrip = styled.div`
    display: flex;
`

const Tick = styled.span`
    position: relative;
    width: 9px;
    display: flex;
    align-items: center;
    justify-content: center;
    background-color: ${p => p.$white ? '#fff' : 'transparent'};
    color: #5f6368;
    font-size: 8px;
    line-height: 10px;
    &::before {
        content: '';
        display: ${p => p.$none ? 'none' : 'block'};
        width: 1px;
        height: ${p => p.$major ? 5 : 2}px;
        background-color: #a5a8ad;
    }
    svg {
        position: absolute;
        left: 2px;
        top: 1px;
        z-index: 1;
    }
`

const Canvas = styled.div`
    position: relative;
    flex: 1;
    min-height: 0;
    display: flex;
    justify-content: center;
    padding-right: 40px;
    background-color: #f8f9fa;
    overflow: hidden;
`

const SideRulerBar = styled.div`
    width: 11px;
    flex: none;
    margin-right: auto;
    background-color: #e6e7eb;
    color: #5f6368;
    font-size: 8px;
`

const SideTick = styled.div`
    height: 9px;
    display: flex;
    align-items: center;
    justify-content: center;
    background-color: ${p => p.$white ? '#fff' : 'transparent'};
    &::before {
        content: '';
        display: ${p => p.$none ? 'none' : 'block'};
        width: ${p => p.$major ? 5 : 2}px;
        height: 1px;
        background-color: #a5a8ad;
    }
    span {
        transform: rotate(-90deg);
    }
`

const OutlineButton = styled.button`
    position: absolute;
    left: 23px;
    top: 21px;
    color: #9a9da1;
`

const Page = styled.article`
    position: relative;
    width: 614px;
    flex: none;
    margin-right: auto;
    padding: 12px 72px 0;
    border: solid #e3e5e8;
    border-width: 0 1px;
    background-color: #fff;
    font-family: Calibri, Carlito, Lato, sans-serif;
    font-size: 14px;
    white-space: nowrap;
    h1 {
        margin: 0;
        font-size: 18px;
        font-weight: 400;
        line-height: 22px;
    }
    mark {
        display: inline-block;
        background-color: #f00;
        font-weight: 700;
    }
    p {
        margin: 9px 0 10px;
        line-height: 22px;
    }
`

const MathText = styled.span`
    font-family: "Liberation Serif", serif;
`

const Op = styled.span`
    margin: 0 4px;
    font-family: "Liberation Serif", serif;
`

const Fraction = styled.span`
    display: inline-flex;
    flex-direction: column;
    vertical-align: middle;
    font-size: 9px;
    line-height: 9px;
    text-align: center;
    span {
        padding: 0 1px;
    }
    span + span {
        border-top: 1px solid #000;
    }
`

const Talk = styled.table`
    width: 469px;
    border-collapse: collapse;
    th, td {
        border: 1px solid #222;
        vertical-align: top;
        text-align: left;
    }
    th {
        width: 52px;
    }
`

const TalkRow = styled.tr`
    height: ${p => p.$height}px;
    line-height: ${p => p.$line}px;
    th, td {
        position: relative;
        padding: ${p => p.$top}px 5px 0;
    }
`

const Selection = styled.span`
    position: absolute;
    left: 299px;
    top: 34px;
    width: 8px;
    height: 29px;
    background-color: #d8d8d8;
`

const CellMenu = styled.button`
    position: absolute;
    right: 2px;
    top: 2px;
    border: 1px solid #dadce0;
    color: #a5a8ad;
`

const Questions = styled.ol`
    margin: 22px 0 0;
    padding: 0;
    list-style: none;
    counter-reset: question;
`

const Question = styled.li`
    position: relative;
    margin-bottom: 7px;
    padding-left: 25px;
    line-height: ${p => p.$line}px;
    counter-increment: question;
    &::before {
        content: counter(question) '.';
        position: absolute;
        left: 0;
    }
`

const CommentPill = styled.div`
    position: absolute;
    right: -16px;
    top: 238px;
    width: 30px;
    height: 70px;
    display: flex;
    flex-direction: column;
    align-items: center;
    justify-content: center;
    gap: 14px;
    border-radius: 15px;
    background-color: #fff;
    box-shadow: 0 0 3px #c4c7cc;
`

const ScrollThumb = styled.span`
    position: absolute;
    right: 3px;
    top: 207px;
    width: 6px;
    height: 51px;
    border-radius: 3px;
    background-color: #dadce0;
`

const Explore = styled.button`
    position: absolute;
    right: 12px;
    bottom: 5px;
    width: 29px;
    height: 29px;
    display: flex;
    align-items: center;
    justify-content: center;
    border: 1px solid #dadce0;
    border-radius: 2px;
    background-color: #fff;
    color: #666;
`

const Side = styled.aside`
    width: 42px;
    flex: none;
    display: flex;
    flex-direction: column;
    align-items: center;
    gap: 28px;
    padding: 14px 0;
    border-left: 1px solid #dadce0;
    color: #5f6368;
    hr {
        width: 15px;
        margin: -2px 0;
        border: none;
        border-top: 1px solid #dadce0;
    }
    button:last-child {
        margin-top: auto;
    }
`

const TaskbarRow = styled.footer`
    height: 30px;
    flex: none;
    display: flex;
    background-color: #1b1b1b;
    color: #fff;
    font-family: "Open Sans", sans-serif;
`

const Start = styled.button`
    width: 36px;
    display: flex;
    align-items: center;
    justify-content: center;
`

const TaskSearch = styled.label`
    width: 258px;
    display: flex;
    align-items: center;
    gap: 5px;
    padding-left: 7px;
    border: 1px solid #bbb;
    background-color: #f2f2f2;
    color: #333;
    font-size: 11px;
    svg {
        transform: scaleX(-1);
    }
    input::placeholder {
        color: #444;
    }
`

const Pinned = styled.div`
    width: 478px;
    display: flex;
`

const TaskButton = styled.button`
    flex: 1;
    display: flex;
    align-items: center;
    justify-content: center;
    background-color: ${p => p.$active ? '#4a4a4a' : 'transparent'};
    border-bottom: 2px solid ${p => p.$running ? '#e8a8e0' : 'transparent'};
`

const Tray = styled.div`
    margin-left: auto;
    display: flex;
    align-items: center;
    gap: 7px;
    padding-right: 11px;
    svg {
        fill: none;
        stroke: #fff;
    }
`

const Clock = styled.div`
    display: flex;
    flex-direction: column;
    align-items: center;
    font-size: 9px;
    line-height: 13px;
`

const Notice = styled.button`
    margin-left: 6px;
`

export default App
